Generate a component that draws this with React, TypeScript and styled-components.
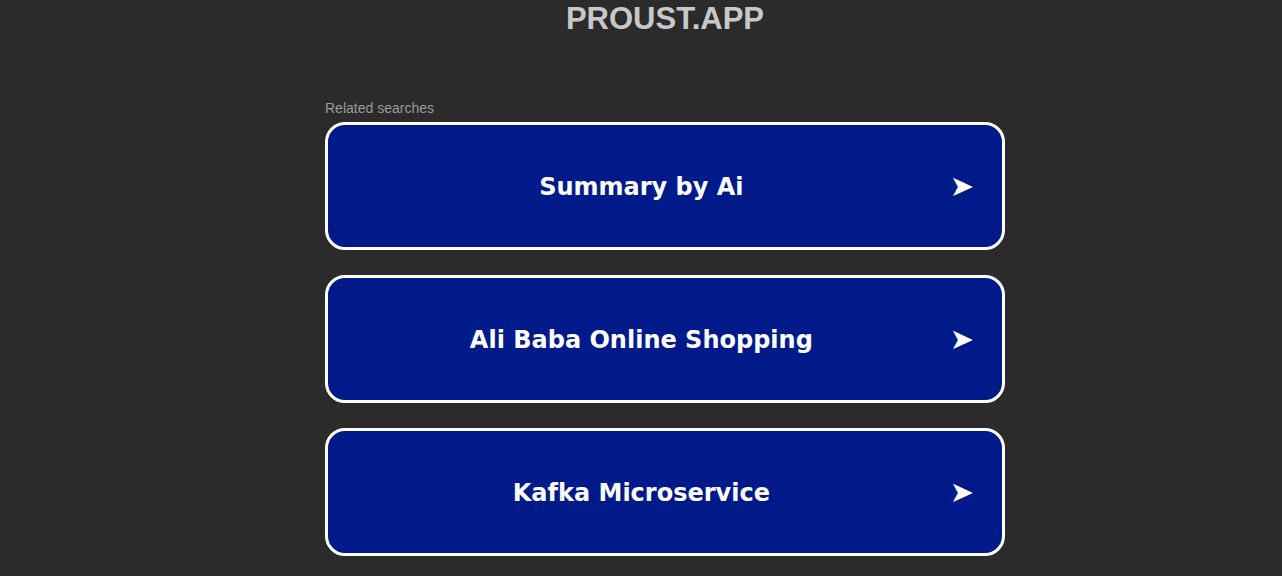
import styled, { createGlobalStyle } from "styled-components";

const GlobalStyle = createGlobalStyle`
    html, body {
        margin: 0;
        padding: 0;
        background-color: #2b2b2b;
    }
    body {
        font-family: "Liberation Sans", Arial, sans-serif;
    }
`

const PageDiv = styled.div`
    display: flex;
    flex-direction: column;
    align-items: center;
    padding-left: 48px;
    min-height: 576px;
    box-sizing: border-box;
`
const SiteTitle = styled.h1`
    margin: 0;
    font-family: "Liberation Sans", Arial, sans-serif;
    font-size: 31px;
    line-height: 38px;
    font-weight: bold;
    color: #c8c8c8;
`
const SearchesColumn = styled.div`
    width: 680px;
    margin-top: 62px;
    display: flex;
    flex-direction: column;
`
const RelatedLabel = styled.div`
    font-size: 14px;
    line-height: 16px;
    color: #9a9a9a;
    margin-bottom: 6px;
`
const CardList = styled.ul`
    list-style: none;
    margin: 0;
    padding: 0;
    display: flex;
    flex-direction: column;
    gap: 25px;
`
const SearchCard = styled.li`
    height: 128px;
    box-sizing: border-box;
    border: 3px solid #ffffff;
    border-radius: 20px;
    background-color: #011a89;
    display: flex;
    align-items: center;
    padding-right: 28px;
    cursor: pointer;
`
const CardText = styled.span`
    flex: 1;
    text-align: center;
    font-family: "DejaVu Sans", Verdana, sans-serif;
    font-weight: bold;
    font-size: 24px;
    color: #ffffff;
    padding-top: 2px;
    padding-left: 5px;
`
const ArrowGlyph = styled.span`
    font-family: "DejaVu Sans", sans-serif;
    font-size: 29px;
    color: #ffffff;
    line-height: 1;
`

const relatedSearches = [
    "Summary by Ai",
    "Ali Baba Online Shopping",
    "Kafka Microservice",
]

export default function App() {
    return (
        <PageDiv>
            <GlobalStyle />
            <SiteTitle>PROUST.APP</SiteTitle>
            <SearchesColumn>
                <RelatedLabel>Related searches</RelatedLabel>
                <CardList>
                    {relatedSearches.map((s, i) => (
                        <SearchCard key={i}>
                            <CardText>{s}</CardText>
                            <ArrowGlyph>➤</ArrowGlyph>
                        </SearchCard>
                    ))}
                </CardList>
            </SearchesColumn>
        </PageDiv>
    )
}
